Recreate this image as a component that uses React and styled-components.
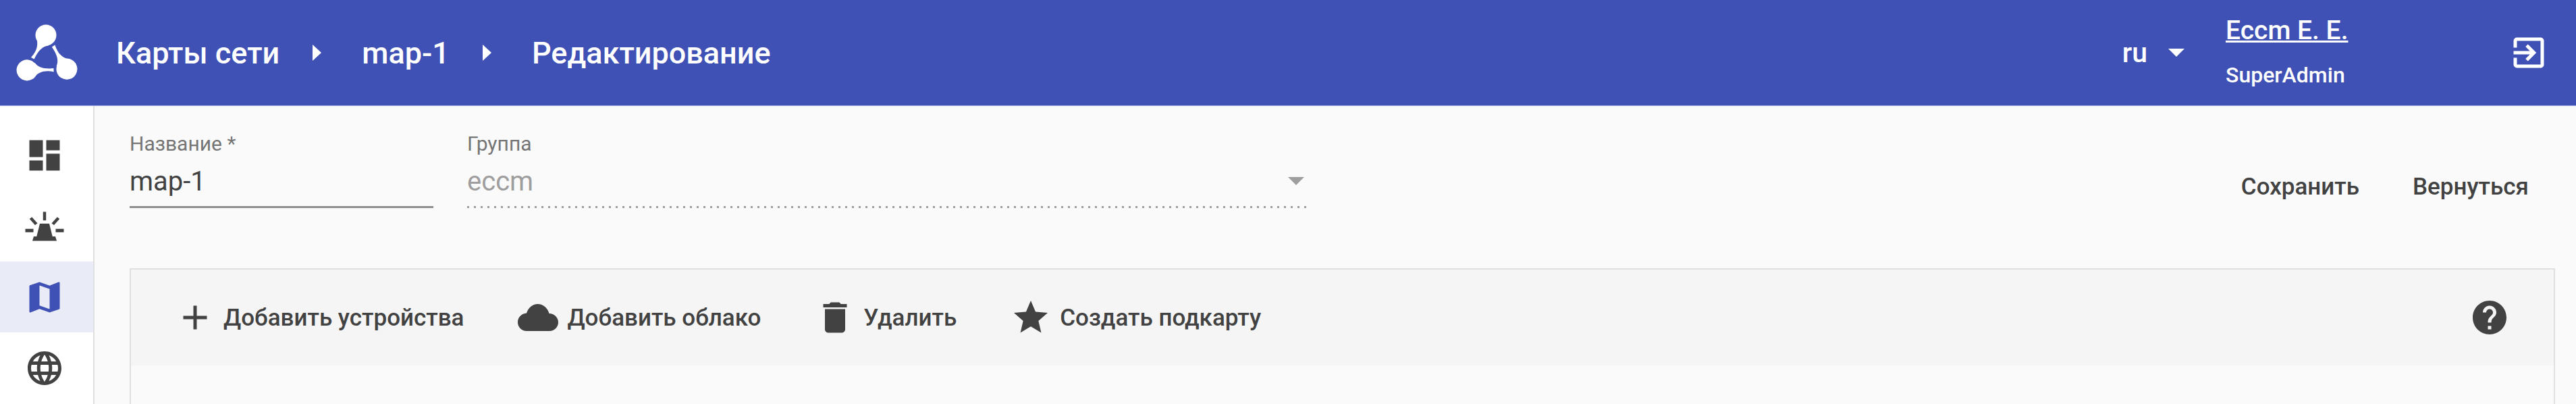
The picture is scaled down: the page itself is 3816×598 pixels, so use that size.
import React from 'react';
import styled, { createGlobalStyle } from 'styled-components';
import { MdAdd, MdDashboard, MdDelete, MdExitToApp, MdHelp, MdLanguage, MdMap, MdStar } from 'react-icons/md';

const GlobalStyle = createGlobalStyle`
  html, body {
    margin: 0;
    padding: 0;
    height: 100%;
    overflow: hidden;
    background: #fafafa;
    font-family: Roboto, "Noto Sans", sans-serif;
  }
`;

const Page = styled.div`
  width: 3816px;
  height: 598px;
  display: flex;
  flex-direction: column;
  overflow: hidden;
`;

const Header = styled.header`
  flex: 0 0 156px;
  display: flex;
  align-items: center;
  background: #3f51b5;
  color: #fff;
  padding: 0 40px 0 23px;
  border-bottom: 1px solid #aab2e0;
`;

const LogoMark = styled.svg`
  width: 92px;
  height: 84px;
  flex: none;
  margin-right: 57px;
`;

const Crumbs = styled.nav`
  display: flex;
  align-items: center;
  font-size: 45px;
  font-weight: 500;
`;

const CrumbArrow = styled.span`
  width: 0;
  height: 0;
  margin: 0 60px 0 49px;
  border-top: 12px solid transparent;
  border-bottom: 12px solid transparent;
  border-left: 13px solid #fff;
`;

const HeaderRight = styled.div`
  margin-left: auto;
  display: flex;
  align-items: center;
`;

const Lang = styled.div`
  display: flex;
  align-items: center;
  gap: 31px;
  font-size: 41px;
  font-weight: 500;
  margin-right: 61px;
`;

const LangArrow = styled.span`
  width: 0;
  height: 0;
  border-left: 12px solid transparent;
  border-right: 12px solid transparent;
  border-top: 12px solid #fff;
`;

const User = styled.div`
  display: flex;
  flex-direction: column;
  gap: 26px;
  width: 419px;
  margin-top: -4px;
`;

const UserName = styled.a`
  font-size: 39px;
  font-weight: 500;
  line-height: 44px;
  text-decoration: underline;
`;

const UserRole = styled.span`
  font-size: 32px;
  font-weight: 500;
  line-height: 36px;
`;

const Body = styled.div`
  flex: 1;
  display: flex;
  min-height: 0;
`;

const Sidebar = styled.aside`
  flex: 0 0 138px;
  padding-top: 20px;
  background: #fff;
  border-right: 2px solid #e0e0e0;
`;

const NavItem = styled.div`
  height: 105px;
  padding-right: 6px;
  display: flex;
  align-items: center;
  justify-content: center;
  color: ${props => (props.$active ? '#3f51b5' : '#424242')};
  background: ${props => (props.$active ? '#e9ebf6' : 'transparent')};
  font-size: 60px;
`;

const Content = styled.main`
  flex: 1;
  padding: 39px 31px 0 52px;
  min-width: 0;
`;

const FormRow = styled.div`
  display: flex;
  align-items: flex-start;
  height: 201px;
`;

const Field = styled.div`
  width: ${props => props.$width}px;
  margin-right: 50px;
`;

const FieldLabel = styled.div`
  font-size: 30px;
  line-height: 34px;
  color: #757575;
`;

const FieldValue = styled.div`
  display: flex;
  align-items: center;
  justify-content: space-between;
  height: 58px;
  margin-top: 9px;
  padding-bottom: 8px;
  font-size: 40px;
  color: #424242;
  border-bottom: 3px solid #8e8e8e;
`;

const DisabledValue = styled(FieldValue)`
  padding-bottom: 11px;
  color: #9e9e9e;
  border-bottom: none;
  background: repeating-linear-gradient(to right, #9e9e9e 0 3px, transparent 3px 10px) left bottom / 100% 3px no-repeat;
`;

const SelectArrow = styled.span`
  width: 0;
  height: 0;
  margin-right: 4px;
  border-left: 12px solid transparent;
  border-right: 12px solid transparent;
  border-top: 12px solid #9e9e9e;
`;

const Actions = styled.div`
  margin-left: auto;
  display: flex;
  gap: 79px;
  padding: 61px 39px 0 0;
`;

const TextButton = styled.button`
  border: none;
  background: none;
  padding: 0;
  color: #424242;
  font-family: inherit;
  font-size: 35px;
  font-weight: 500;
  line-height: 40px;
`;

const Panel = styled.section`
  border: 2px solid #e0e0e0;
  border-bottom: none;
  height: 300px;
`;

const Toolbar = styled.div`
  height: 142px;
  display: flex;
  align-items: center;
  padding: 0 65px 0 65px;
  background: #f5f5f5;
`;

const ToolButton = styled.div`
  display: flex;
  align-items: center;
  margin-right: ${props => props.$gap}px;
  color: #424242;
  font-size: 35px;
  font-weight: 500;
`;

const ToolIcon = styled.span`
  display: flex;
  margin-right: ${props => props.$gap}px;
  font-size: 60px;
`;

const HelpIcon = styled.span`
  display: flex;
  margin-left: auto;
  color: #424242;
  font-size: 60px;
`;

const Logo = () => {
  const drop = (
    <>
      <circle cx="68" cy="52" r="15.5" />
      <path d="M54.5 57C56 66 56 74 46 85L50.7 87.5C57 74 64 68 72 67.5Z" />
    </>
  );
  return (
    <LogoMark viewBox="23 36 92 84" fill="#fff">
      <g>{drop}</g>
      <g transform="rotate(120 69 86)">{drop}</g>
      <g transform="rotate(240 69 86)">{drop}</g>
    </LogoMark>
  );
};

const Siren = () => (
  <svg width="1em" height="1em" viewBox="0 0 24 24" fill="currentColor">
    <path d="M11.1 3.4h1.8v5.1h-1.8zM3.1 7.6l1.4-1.1 3.3 3.7-1.4 1.1zM19.5 6.5l1.4 1.1-3.3 3.7-1.4-1.1zM.6 13.5h4.8v2H.6zM18.6 13.5h4.8v2h-4.8zM9.2 10.4h5.6l1.9 7.6h-9.4zM5.6 18h12.8l.8 2.6H4.8z" />
  </svg>
);

const Cloud = () => (
  <svg width="60" height="40" viewBox="0 0 60 40" fill="currentColor">
    <path d="M13 40C5.8 40 0 34.2 0 27 0 19.8 5.8 14 13 13.6 15.5 5.6 22 0 29.5 0 37.8 0 44.5 6.2 46.5 14.1 53.8 14.2 60 20 60 27 60 34.2 54.2 40 47 40Z" />
  </svg>
);

const App = () => (
  <Page>
    <GlobalStyle />
    <Header>
      <Logo />
      <Crumbs>
        <span>Карты сети</span>
        <CrumbArrow />
        <span>map-1</span>
        <CrumbArrow />
        <span>Редактирование</span>
      </Crumbs>
      <HeaderRight>
        <Lang>
          ru
          <LangArrow />
        </Lang>
        <User>
          <UserName>Eccm E. E.</UserName>
          <UserRole>SuperAdmin</UserRole>
        </User>
        <MdExitToApp size={60} />
      </HeaderRight>
    </Header>
    <Body>
      <Sidebar>
        <NavItem><MdDashboard /></NavItem>
        <NavItem><Siren /></NavItem>
        <NavItem $active><MdMap /></NavItem>
        <NavItem><MdLanguage /></NavItem>
      </Sidebar>
      <Content>
        <FormRow>
          <Field $width={450}>
            <FieldLabel>Название *</FieldLabel>
            <FieldValue>map-1</FieldValue>
          </Field>
          <Field $width={1244}>
            <FieldLabel>Группа</FieldLabel>
            <DisabledValue>
              eccm
              <SelectArrow />
            </DisabledValue>
          </Field>
          <Actions>
            <TextButton>Сохранить</TextButton>
            <TextButton>Вернуться</TextButton>
          </Actions>
        </FormRow>
        <Panel>
          <Toolbar>
            <ToolButton $gap={80}>
              <ToolIcon $gap={12}><MdAdd /></ToolIcon>
              Добавить устройства
            </ToolButton>
            <ToolButton $gap={80}>
              <ToolIcon $gap={13}><Cloud /></ToolIcon>
              Добавить облако
            </ToolButton>
            <ToolButton $gap={80}>
              <ToolIcon $gap={12}><MdDelete /></ToolIcon>
              Удалить
            </ToolButton>
            <ToolButton $gap={0}>
              <ToolIcon $gap={13}><MdStar /></ToolIcon>
              Создать подкарту
            </ToolButton>
            <HelpIcon><MdHelp /></HelpIcon>
          </Toolbar>
        </Panel>
      </Content>
    </Body>
  </Page>
);

export default App;
